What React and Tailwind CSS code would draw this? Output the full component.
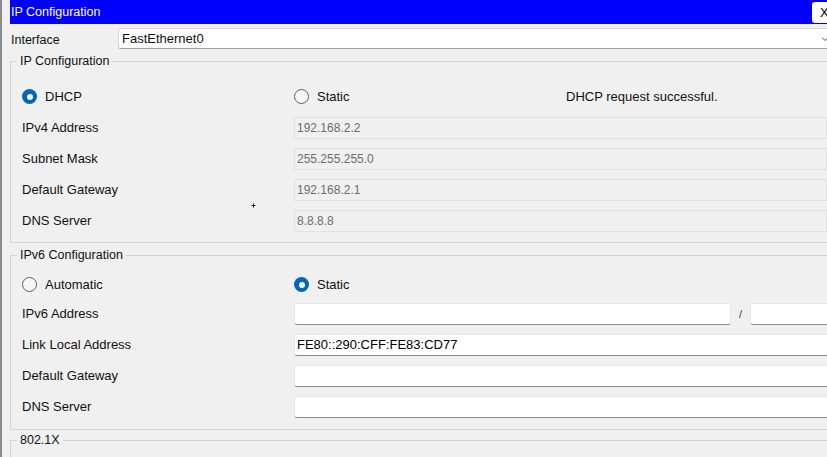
import React from 'react';

const Radio = ({ checked, label }) => (
  <div className="flex items-center gap-[8px]">
    {checked ? (
      <span className="flex h-[15px] w-[15px] items-center justify-center rounded-full bg-[#0067c0]">
        <span className="h-[6px] w-[6px] rounded-full bg-white" />
      </span>
    ) : (
      <span className="h-[15px] w-[15px] rounded-full border border-[#5f5f5f] bg-[#f6f6f6]" />
    )}
    <span>{label}</span>
  </div>
);

const Row = ({ label, children }) => (
  <div className="flex h-[22px] items-center">
    <div className="w-[272px] shrink-0">{label}</div>
    {children}
  </div>
);

const ReadOnly = ({ value }) => (
  <div className="flex h-full w-[533px] shrink-0 items-center border border-[#e2e2e2] bg-[#f0f0f0] pl-[2px] text-[12px] text-[#6d6d6d]">
    {value}
  </div>
);

const Field = ({ value, w = 'w-[540px]' }) => (
  <div className={`flex h-full shrink-0 items-center rounded-[3px] border border-[#e6e6e6] border-b-[#8a8a8a] bg-white pl-[2px] text-[13px] text-black ${w}`}>
    {value}
  </div>
);

export default function App() {
  return (
    <div className="relative h-[457px] w-[827px] overflow-hidden border-l-2 border-[#8c8c8c] bg-[#f0f0f0] font-['Liberation_Sans',Arial,sans-serif] text-[13px] text-[#111]">
      {/* title bar */}
      <div className="ml-[8px] flex h-[24px] w-[822px] items-start justify-between bg-[#0000ff]">
        <span className="mt-[5px] pl-[1px] text-[12.5px] leading-[15px] text-white">IP Configuration</span>
        <div className="mt-[2px] flex h-[21px] w-[20px] items-center rounded-[3px] bg-white pl-[8px] text-[13px] text-black">X</div>
      </div>

      {/* interface */}
      <div className="flex items-start">
        <div className="mt-[9px] w-[116px] shrink-0 pl-[9px] text-[12.5px] leading-[15px]">Interface</div>
        <div className="mt-[4px] flex h-[21px] w-[712px] shrink-0 items-center justify-between rounded-[3px] border border-[#d6d6d6] border-b-[#a0a0a0] bg-white pl-[3px]">
          <span>FastEthernet0</span>
          <svg width="8" height="6" viewBox="0 0 8 6">
            <path d="M1 1.5 L4 4.5 L7 1.5" fill="none" stroke="#555" strokeWidth="1" />
          </svg>
        </div>
      </div>

      {/* IPv4 */}
      <fieldset className="ml-[8px] mt-[5px] w-[830px] border border-r-0 border-[#d4d4d4] pb-[10px] pl-[11px] pt-[16px]">
        <legend className="-ml-[5px] px-[3px] text-[12.5px] leading-[15px]">IP Configuration</legend>
        <div className="flex flex-col gap-[9px]">
          <div className="flex h-[23px] items-center">
            <div className="w-[272px] shrink-0"><Radio checked label="DHCP" /></div>
            <div className="w-[272px] shrink-0"><Radio label="Static" /></div>
            <span>DHCP request successful.</span>
          </div>
          <Row label="IPv4 Address"><ReadOnly value="192.168.2.2" /></Row>
          <Row label="Subnet Mask"><ReadOnly value="255.255.255.0" /></Row>
          <Row label="Default Gateway"><ReadOnly value="192.168.2.1" /></Row>
          <Row label="DNS Server"><ReadOnly value="8.8.8.8" /></Row>
        </div>
      </fieldset>

      {/* IPv6 */}
      <fieldset className="ml-[8px] mt-[5px] w-[830px] border border-r-0 border-[#d4d4d4] pb-[11px] pl-[11px] pt-[12px]">
        <legend className="-ml-[5px] px-[3px] text-[12.5px] leading-[15px]">IPv6 Configuration</legend>
        <div className="flex flex-col gap-[9px]">
          <div className="flex h-[19px] items-center">
            <div className="w-[272px] shrink-0"><Radio label="Automatic" /></div>
            <Radio checked label="Static" />
          </div>
          <Row label="IPv6 Address">
            <Field value="" w="w-[437px]" />
            <span className="w-[19px] shrink-0 pl-[8px] text-[11px] text-[#444]">/</span>
            <Field value="" w="w-[90px]" />
          </Row>
          <Row label="Link Local Address"><Field value="FE80::290:CFF:FE83:CD77" /></Row>
          <Row label="Default Gateway"><Field value="" /></Row>
          <Row label="DNS Server"><Field value="" /></Row>
        </div>
      </fieldset>

      {/* 802.1X */}
      <fieldset className="ml-[8px] mt-[3px] h-[40px] w-[830px] border border-r-0 border-[#d4d4d4]">
        <legend className="ml-[6px] px-[3px] text-[12.5px] leading-[15px]">802.1X</legend>
      </fieldset>

      {/* stray cursor mark */}
      <svg width="5" height="5" viewBox="0 0 5 5" className="absolute left-[249px] top-[203px]">
        <path d="M2.5 0.5 V4.5 M0.5 2.5 H4.5" stroke="#111" strokeWidth="1" />
      </svg>
    </div>
  );
}
